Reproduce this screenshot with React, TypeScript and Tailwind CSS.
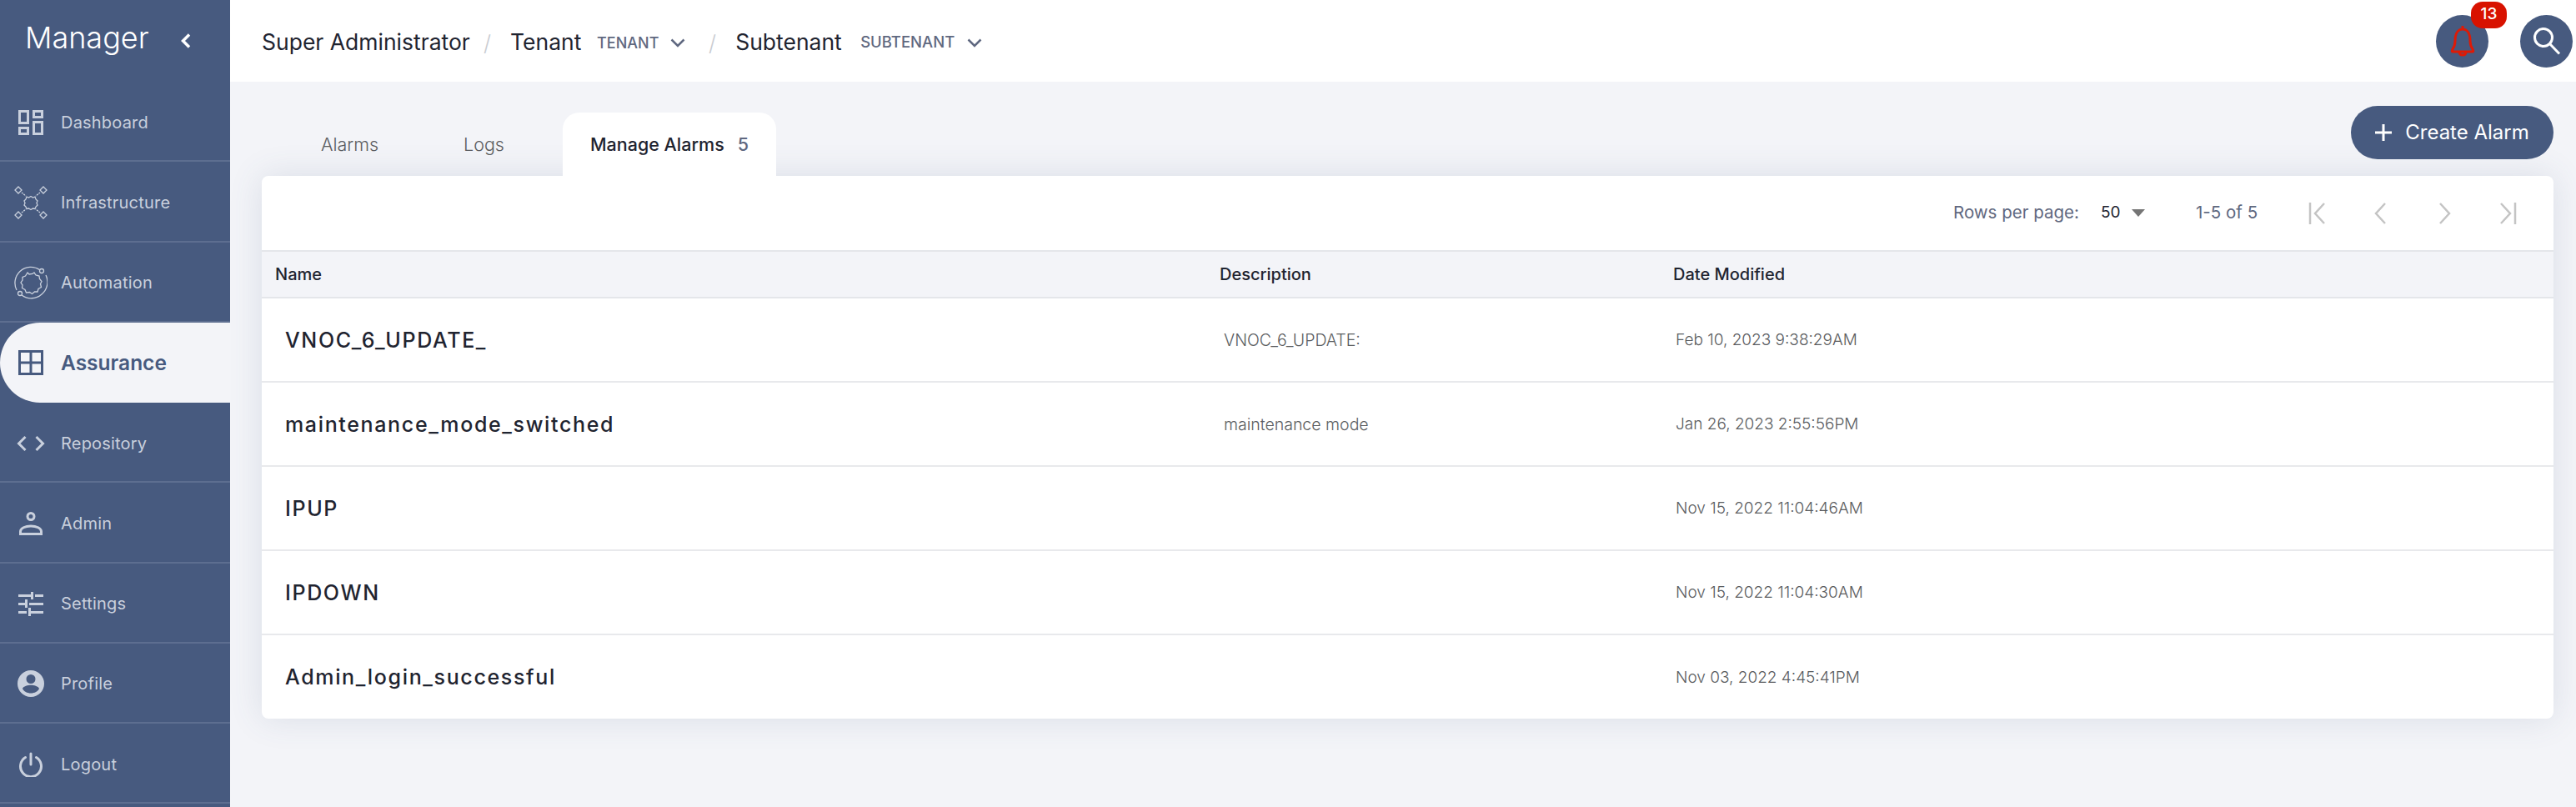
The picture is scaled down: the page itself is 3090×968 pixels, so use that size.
import React from "react";

const NAV_TEXT = "#c9d0dd";

function DashboardIcon() {
  return (
    <svg width="30" height="30" viewBox="0 0 30 30" fill="none" stroke="currentColor" strokeWidth="3">
      <rect x="1.5" y="1.5" width="10" height="14" />
      <rect x="18.5" y="1.5" width="10" height="7" />
      <rect x="1.5" y="21.5" width="10" height="7" />
      <rect x="18.5" y="14.5" width="10" height="14" />
    </svg>
  );
}

function InfrastructureIcon() {
  return (
    <svg width="40" height="40" viewBox="0 0 40 40" fill="none" stroke="currentColor" strokeWidth="1.3">
      <path d="M15 13l2.500 1 2.500-1.500 2.500 1.500 2.500-1 1 3 2 2-1 2.500 1 2.500-2 2-1 2.500-2.500-.5-2.500 1.500-2.500-1.500-2.500.5-1-2.500-2-2 1-2.500-1-2.500 2-2z" />
      <path d="M5 1l4 4-4 4-4-4zM35 1l4 4-4 4-4-4zM5 31l4 4-4 4-4-4zM35 31l4 4-4 4-4-4z" />
      <path d="M9 8l5 4M31 8l-5 4M9 32l5-4M31 32l-5-4" strokeDasharray="2 1" />
    </svg>
  );
}

function AutomationIcon() {
  return (
    <svg width="40" height="40" viewBox="0 0 40 40" fill="none" stroke="currentColor" strokeWidth="1.3">
      <path d="M31 5A19 19 0 0 0 7 6.500 19 19 0 0 0 3 29" />
      <path d="M9 35A19 19 0 0 0 33 34 19 19 0 0 0 38 11" />
      <circle cx="33" cy="6" r="2.500" />
      <circle cx="7" cy="33" r="2.500" />
      <path d="M16 8l2 2 4-.5 2-1.500 2 3 4 1 .5 3.500 2.500 3-1.500 3 1 4-3.500 2-1 3.500-3.500 0-3 2.500-3-2-4 .5-1.500-3.500-3.500-2 .5-3.500-2-3 2-3 0-3.500 3.500-1.500z" />
    </svg>
  );
}

function AssuranceIcon() {
  return (
    <svg width="30" height="30" viewBox="0 0 30 30" fill="none" stroke="currentColor" strokeWidth="3">
      <rect x="1.500" y="1.500" width="27" height="27" />
      <path d="M15 1.500v27M1.500 15h27" />
    </svg>
  );
}

function RepositoryIcon() {
  return (
    <svg width="34" height="20" viewBox="0 0 34 20" fill="none" stroke="currentColor" strokeWidth="3">
      <path d="M10.500 2L2.500 10l8 8M23.500 2l8 8-8 8" />
    </svg>
  );
}

function AdminIcon() {
  return (
    <svg width="28" height="28" viewBox="0 0 28 28" fill="none" stroke="currentColor" strokeWidth="3">
      <circle cx="14" cy="5.500" r="4" />
      <path d="M1.500 26.500v-3c0-4 6-6.500 12.500-6.500s12.500 2.500 12.500 6.500v3z" />
    </svg>
  );
}

function SettingsIcon() {
  return (
    <svg width="30" height="30" viewBox="0 0 30 30" fill="currentColor">
      <path d="M0 4h15v3H0zM20 4h10v3H20zM15 1h3v9h-3zM0 14h8v3H0zM13 14h17v3H13zM8 10h3v10H8zM0 24h10v3H0zM15 24h15v3H15zM12 20h3v10h-3z" />
    </svg>
  );
}

function ProfileIcon() {
  return (
    <svg width="32" height="32" viewBox="0 0 32 32" fill="currentColor">
      <path d="M16 0a16 16 0 1 0 0 32 16 16 0 0 0 0-32zm0 5a5.500 5.500 0 1 1 0 11 5.500 5.500 0 0 1 0-11zm0 22.500c-4.500 0-8.500-2.200-10-5.500 1-2.800 6.500-4.200 10-4.200s9 1.400 10 4.200c-1.500 3.300-5.500 5.500-10 5.500z" />
    </svg>
  );
}

function LogoutIcon() {
  return (
    <svg width="30" height="30" viewBox="0 0 30 30" fill="none" stroke="currentColor" strokeWidth="3" strokeLinecap="round">
      <path d="M15 2v13" />
      <path d="M8.500 6.500a12.500 12.500 0 1 0 13 0" />
    </svg>
  );
}

const navItems = [
  { label: "Dashboard", icon: <DashboardIcon /> },
  { label: "Infrastructure", icon: <InfrastructureIcon /> },
  { label: "Automation", icon: <AutomationIcon /> },
  { label: "Assurance", icon: <AssuranceIcon />, active: true },
  { label: "Repository", icon: <RepositoryIcon /> },
  { label: "Admin", icon: <AdminIcon /> },
  { label: "Settings", icon: <SettingsIcon /> },
  { label: "Profile", icon: <ProfileIcon /> },
  { label: "Logout", icon: <LogoutIcon /> },
];

const rows = [
  { name: "VNOC_6_UPDATE_", description: "VNOC_6_UPDATE:", date: "Feb 10, 2023 9:38:29AM" },
  { name: "maintenance_mode_switched", description: "maintenance mode", date: "Jan 26, 2023 2:55:56PM" },
  { name: "IPUP", description: "", date: "Nov 15, 2022 11:04:46AM" },
  { name: "IPDOWN", description: "", date: "Nov 15, 2022 11:04:30AM" },
  { name: "Admin_login_successful", description: "", date: "Nov 03, 2022 4:45:41PM" },
];

function Sidebar() {
  return (
    <aside className="w-[276px] shrink-0 bg-[#475a7f]">
      <div className="flex h-[98px] items-center pl-[30px]">
        <span className="w-[186px] pb-[8px] text-[36px] font-light text-white">Manager</span>
        <svg width="14" height="20" viewBox="0 0 14 20" fill="none" stroke="#ffffff" strokeWidth="3.500">
          <path d="M11 2.500L3.500 10l7.500 7.500" />
        </svg>
      </div>
      {navItems.map((item) =>
        item.active ? (
          <div
            key={item.label}
            className="flex h-[96.25px] items-center rounded-l-[48px] bg-[#f3f4f8] text-[#475a7f]"
          >
            <div className="flex w-[73px] justify-center">{item.icon}</div>
            <span className="text-[24.5px] font-semibold">{item.label}</span>
          </div>
        ) : (
          <div
            key={item.label}
            className="flex h-[96.25px] items-center border-b-2 border-[#5d6e90] pt-[3px]"
            style={{ color: NAV_TEXT }}
          >
            <div className="flex w-[73px] justify-center">{item.icon}</div>
            <span className="text-[20px] tracking-[0.2px]">{item.label}</span>
          </div>
        ),
      )}
    </aside>
  );
}

function Chevron() {
  return (
    <svg width="18" height="11" viewBox="0 0 18 11" fill="none" stroke="#5f6880" strokeWidth="2.500">
      <path d="M1.500 1.500L9 9l7.500-7.500" />
    </svg>
  );
}

function Slash() {
  return <span className="text-[26px] font-light text-[#c9ccd2]">/</span>;
}

function Header() {
  return (
    <header className="flex h-[98px] items-center bg-white pl-[38px] pr-[4px]">
      <div className="flex items-center pt-[4px] text-[#1f2430]">
        <span className="w-[251px] whitespace-nowrap text-[26.5px]">Super Administrator</span>
        <div className="ml-[15px]">
          <Slash />
        </div>
        <span className="ml-[23px] w-[84px] text-[26.5px]">Tenant</span>
        <span className="ml-[20px] w-[77px] text-[18px] font-medium text-[#5f6880]">TENANT</span>
        <div className="ml-[11px]">
          <Chevron />
        </div>
        <div className="ml-[28px]">
          <Slash />
        </div>
        <span className="ml-[23px] w-[131px] text-[26.5px]">Subtenant</span>
        <span className="ml-[19px] w-[117px] text-[18.500px] font-medium text-[#5f6880]">SUBTENANT</span>
        <div className="ml-[11px]">
          <Chevron />
        </div>
      </div>
      <div className="ml-auto flex items-center gap-[38px]">
        <div className="relative flex h-[63px] w-[63px] items-center justify-center rounded-full bg-[#475a7f]">
          <svg width="32" height="38" viewBox="0 0 32 38" fill="none" stroke="#dd1a06" strokeWidth="3">
            <path d="M16 1v3M4 29c2-3 3-5 3-10 0-8 3-14 9-14s9 6 9 14c0 5 1 7 3 10 1 2 1 3 0 3H4c-1 0-1-1 0-3z" />
            <path d="M12 32c0 3 2 4 4 4s4-1 4-4" />
          </svg>
          <span className="absolute -top-[16px] left-[42px] flex h-[32px] w-[43px] items-center justify-center rounded-[14px] bg-[#d81200] text-[19px] font-medium text-white">
            13
          </span>
        </div>
        <div className="flex h-[63px] w-[63px] items-center justify-center rounded-full bg-[#475a7f]">
          <svg width="34" height="34" viewBox="0 0 34 34" fill="none" stroke="#ffffff" strokeWidth="3">
            <circle cx="13" cy="13" r="10.500" />
            <path d="M20.500 20.500L32 32.500" />
          </svg>
        </div>
      </div>
    </header>
  );
}

function PagerIcon({ d }: { d: string }) {
  return (
    <svg width="24" height="30" viewBox="0 0 24 30" fill="none" stroke="#c4c4c4" strokeWidth="2.500">
      <path d={d} />
    </svg>
  );
}

function Toolbar() {
  return (
    <div className="flex h-[89px] items-center pl-[2029px] text-[20.5px]">
      <span className="w-[151px] whitespace-nowrap text-[#5f6880]">Rows per page:</span>
      <span className="ml-[26px] w-[25px] text-[19px] text-[#1f2430]">50</span>
      <svg className="ml-[12px]" width="16" height="9" viewBox="0 0 16 9" fill="#757575">
        <path d="M0 0h16l-8 9z" />
      </svg>
      <span className="ml-[61px] w-[75px] whitespace-nowrap text-[#5f6880]">1-5 of 5</span>
      <div className="ml-[59px] flex gap-[52px]">
        <PagerIcon d="M3 2v26M20 3L9 15l11 12" />
        <PagerIcon d="M17 3L6 15l11 12" />
        <PagerIcon d="M7 3l11 12L7 27" />
        <PagerIcon d="M21 2v26M4 3l11 12L4 27" />
      </div>
    </div>
  );
}

function AlarmTable() {
  return (
    <div className="rounded-[8px] bg-white shadow-[0_0_40px_rgba(71,90,127,0.14)]">
      <Toolbar />
      <div className="grid h-[58px] grid-cols-[1135px_544px_1fr] items-center border-y-2 border-[#e4e6ea] bg-[#f3f4f8] text-[20px] font-medium text-[#1f2430]">
        <span className="pl-[16px]">Name</span>
        <span className="pl-[14px]">Description</span>
        <span className="pl-[14px]">Date Modified</span>
      </div>
      {rows.map((row) => (
        <div
          key={row.name}
          className="grid h-[101px] grid-cols-[1135px_544px_1fr] items-center border-b-2 border-[#e8e9ec] pt-[2px] last:h-[100px] last:border-b-0"
        >
          <span className="pl-[28px] text-[25px] font-medium tracking-[1.650px] text-[#1f2430]">{row.name}</span>
          <span className="pl-[19px] text-[19.500px] font-light text-[#5a5c60]">{row.description}</span>
          <span className="pl-[17px] text-[19px] font-light text-[#5a5c60]">{row.date}</span>
        </div>
      ))}
    </div>
  );
}

export default function App() {
  return (
    <div
      className="flex h-[968px] w-[3090px] overflow-hidden bg-[#f3f4f8]"
      style={{ fontFamily: "Inter, 'Liberation Sans', sans-serif" }}
    >
      <Sidebar />
      <main className="flex min-w-0 flex-1 flex-col">
        <Header />
        <div className="pl-[38px] pr-[27px] pt-[29px]">
          <div className="flex h-[84px] items-start justify-between">
            <div className="mt-[8px] flex h-[76px] gap-[39px] pl-[39px] text-[21.500px]">
              <div className="flex h-full w-[133px] items-center justify-center font-light text-[#5a5c60]">Alarms</div>
              <div className="flex h-full w-[111px] items-center justify-center font-light text-[#5a5c60]">Logs</div>
              <div className="flex h-full w-[256px] items-center justify-center gap-[16px] rounded-t-[20px] bg-white font-medium text-[#1f2430]">
                <span>Manage Alarms</span>
                <span className="text-[#5f6880]">5</span>
              </div>
            </div>
            <button className="flex h-[64px] w-[243px] items-center justify-center gap-[16px] rounded-full bg-[#475a7f] text-[24px] text-white">
              <svg width="20" height="20" viewBox="0 0 20 20" fill="none" stroke="#ffffff" strokeWidth="3">
                <path d="M10 0v20M0 10h20" />
              </svg>
              <span>Create Alarm</span>
            </button>
          </div>
          <AlarmTable />
        </div>
      </main>
    </div>
  );
}
